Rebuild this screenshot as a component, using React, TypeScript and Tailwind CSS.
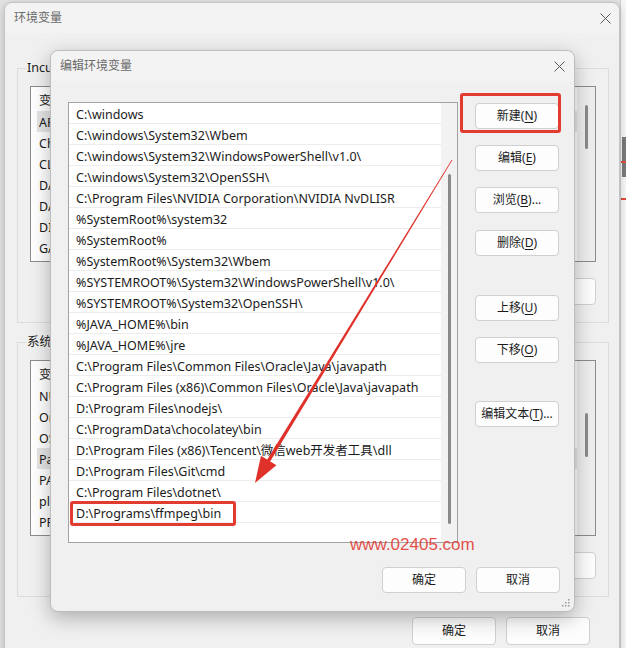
import React from "react";

const paths = [
  "C:\\windows",
  "C:\\windows\\System32\\Wbem",
  "C:\\windows\\System32\\WindowsPowerShell\\v1.0\\",
  "C:\\windows\\System32\\OpenSSH\\",
  "C:\\Program Files\\NVIDIA Corporation\\NVIDIA NvDLISR",
  "%SystemRoot%\\system32",
  "%SystemRoot%",
  "%SystemRoot%\\System32\\Wbem",
  "%SYSTEMROOT%\\System32\\WindowsPowerShell\\v1.0\\",
  "%SYSTEMROOT%\\System32\\OpenSSH\\",
  "%JAVA_HOME%\\bin",
  "%JAVA_HOME%\\jre",
  "C:\\Program Files\\Common Files\\Oracle\\Java\\javapath",
  "C:\\Program Files (x86)\\Common Files\\Oracle\\Java\\javapath",
  "D:\\Program Files\\nodejs\\",
  "C:\\ProgramData\\chocolatey\\bin",
  "D:\\Program Files (x86)\\Tencent\\微信web开发者工具\\dll",
  "D:\\Program Files\\Git\\cmd",
  "C:\\Program Files\\dotnet\\",
  "D:\\Programs\\ffmpeg\\bin",
];

const userVars = ["APPDATA", "ChocolateyLastPathUpdate", "CLASSPATH", "DATA_HOME", "DART_HOME", "DIR", "GATEWAY"];
const sysVars = ["NUMBER_OF_PROCESSORS", "OneDrive", "OS", "Path", "PATHEXT", "platform", "PROCESSOR_ARCHITECTURE"];

const CloseX = () => (
  <svg width="11" height="11" viewBox="0 0 11 11" className="text-[#5a5a5a]">
    <path d="M0.5 0.5 L10.5 10.5 M10.5 0.5 L0.5 10.5" stroke="currentColor" strokeWidth="1" fill="none" />
  </svg>
);

interface BtnProps {
  label?: string;
  mn?: string;
  suffix?: string;
  className?: string;
}

const Btn = ({ label, mn, suffix, className = "" }: BtnProps) => (
  <div
    className={`w-[84px] h-[26px] shrink-0 flex items-center justify-center rounded-[4px] border border-[#d0d0d0] bg-[#fdfdfd] text-[12px] text-[#1b1b1b] ${className}`}
  >
    {label}
    {mn && (
      <>
        (<span className="underline underline-offset-[2px]">{mn}</span>)
      </>
    )}
    {suffix}
  </div>
);

// 뒤쪽 창의 변수 목록 (대부분 앞 창에 가려짐)
const VarList = ({ rows, hi, thumbTop }: { rows: string[]; hi: number; thumbTop: number }) => (
  <div className="ml-[12px] mt-[17px] w-[566px] h-[176px] border border-[#8c8c8c] bg-white flex">
    <div className="flex-1 pl-[6px]">
      <div className="h-[24px] pl-[2px] pt-[3px] flex items-center text-[12.5px] leading-[16px]">变量</div>
      {rows.map((r, i) => (
        <div
          key={r}
          className={`h-[21px] pl-[2px] pt-[3px] flex items-center text-[12.5px] leading-[16px] ${i === hi ? "bg-[#e5e5e5]" : ""}`}
        >
          {r}
        </div>
      ))}
    </div>
    <div className="w-[18px] bg-[#eeeeee] flex justify-center">
      <div className="w-[3px] h-[44px] rounded-full bg-[#8a8a8a]" style={{ marginTop: thumbTop }} />
    </div>
  </div>
);

const Group = ({ title, rows, hi, thumbTop, className = "" }: { title: string; rows: string[]; hi: number; thumbTop: number; className?: string }) => (
  <div className={`relative w-[592px] h-[255px] border border-[#dcdcdc] ${className}`}>
    <span className="absolute -top-[9px] left-[8px] px-[1px] bg-[#f0f0f0] text-[12.5px] leading-[16px] whitespace-nowrap">
      {title}
    </span>
    <VarList rows={rows} hi={hi} thumbTop={thumbTop} />
    <div className="mt-[16px] pr-[12px] flex justify-end gap-[10px]">
      <Btn className="h-[27px]" />
      <Btn className="h-[27px]" />
    </div>
  </div>
);

export default function App() {
  return (
    <div className="relative w-[626px] h-[648px] overflow-hidden bg-[#e3e3e3] text-[#1b1b1b] [font-family:'Noto_Sans','Noto_Sans_CJK_SC',sans-serif]">
      {/* window on the far right */}
      <div className="absolute right-0 top-0 w-[6px] h-full bg-[#f7f7f7] border-l border-[#cfcfcf]">
        <div className="mt-[137px] ml-[1px] w-[4px] h-[40px] bg-[#7a7a7a]" />
        <div className="absolute top-[161px] left-0 w-full h-[2px] bg-[#e04a3a]" />
        <div className="absolute top-[198px] left-0 w-full h-[2px] bg-[#e04a3a]" />
      </div>

      {/* 环境变量 */}
      <div className="absolute left-[4px] top-[2px] w-[616px] h-[660px] rounded-t-[8px] border border-[#c4c4c4] bg-[#f0f0f0] shadow-[0_2px_10px_rgba(0,0,0,0.2)] flex flex-col">
        <div className="h-[30px] shrink-0 pl-[9px] pr-[8px] flex items-center justify-between rounded-t-[8px] bg-[#f3f3f3]">
          <span className="text-[12px] text-[#6a6a6a]">环境变量</span>
          <CloseX />
        </div>
        <div className="px-[12px]">
          <Group title="Incu 的用户变量(U)" rows={userVars} hi={0} thumbTop={18} className="mt-[35px]" />
          <Group title="系统变量(S)" rows={sysVars} hi={3} thumbTop={52} className="mt-[19px]" />
          <div className="mt-[20px] pr-[17px] flex justify-end gap-[10px]">
            <Btn label="确定" className="h-[28px] bg-[#f9f9f9]" />
            <Btn label="取消" className="h-[28px] bg-[#f9f9f9]" />
          </div>
        </div>
      </div>

      {/* 编辑环境变量 */}
      <div className="absolute left-[50px] top-[50px] w-[525px] h-[562px] rounded-[8px] border border-[#bdbdbd] bg-[#f0f0f0] shadow-[0_6px_20px_rgba(0,0,0,0.28)] flex flex-col">
        <div className="h-[30px] shrink-0 pl-[9px] pr-[9px] flex items-center justify-between rounded-t-[8px] bg-[#f3f3f3]">
          <span className="text-[12px] text-[#6a6a6a]">编辑环境变量</span>
          <CloseX />
        </div>
        <div className="pl-[17px] pt-[21px] flex">
          <div className="relative w-[390px] h-[441px] border border-[#a3a3a3] bg-white flex">
            <div className="flex-1">
              {paths.map((p) => (
                <div key={p} className="h-[21px] pl-[7px] pt-[3px] flex items-center border-b border-[#ededed] text-[12.5px] leading-[16px] whitespace-nowrap">
                  {p}
                </div>
              ))}
            </div>
            <div className="w-[16px] bg-[#f2f2f2] flex justify-center">
              <div className="mt-[71px] w-[3px] h-[350px] rounded-full bg-[#8a8a8a]" />
            </div>
            <div className="absolute left-[1px] top-[398px] w-[166px] h-[25px] rounded-[3px] border-[3px] border-[#e23b30]" />
          </div>
          <div className="ml-[17px] flex flex-col">
            <div className="relative mt-[1px]">
              <Btn label="新建" mn="N" />
              <div className="absolute -left-[15px] -top-[10px] w-[101px] h-[40px] rounded-[3px] border-[3px] border-[#e23b30]" />
            </div>
            <Btn label="编辑" mn="E" className="mt-[16px]" />
            <Btn label="浏览" mn="B" suffix="..." className="mt-[16px]" />
            <Btn label="删除" mn="D" className="mt-[17px]" />
            <Btn label="上移" mn="U" className="mt-[39px]" />
            <Btn label="下移" mn="O" className="mt-[16px]" />
            <Btn label="编辑文本" mn="T" suffix="..." className="mt-[38px]" />
          </div>
        </div>
        <div className="mt-[24px] pr-[14px] flex justify-end gap-[10px]">
          <Btn label="确定" />
          <Btn label="取消" />
        </div>
        <svg width="8" height="8" viewBox="0 0 8 8" className="absolute right-[4px] bottom-[4px] text-[#9a9a9a]">
          <g fill="currentColor">
            <rect x="6" y="0" width="1.5" height="1.5" />
            <rect x="3" y="3" width="1.5" height="1.5" />
            <rect x="6" y="3" width="1.5" height="1.5" />
            <rect x="0" y="6" width="1.5" height="1.5" />
            <rect x="3" y="6" width="1.5" height="1.5" />
            <rect x="6" y="6" width="1.5" height="1.5" />
          </g>
        </svg>
      </div>

      {/* watermark */}
      <div className="absolute left-[350px] top-[535px] text-[17px] leading-[20px] text-[#e0302a]/85 [font-family:'Liberation_Sans',Arial,sans-serif]">
        www.02405.com
      </div>

      {/* arrow */}
      <svg className="absolute left-0 top-0 pointer-events-none" width="626" height="648">
        <path d="M452.3 160.2 L451.7 159.8 L266.2 461.3 L269.2 463.1 Z" fill="#e0302a" />
        <path d="M255 483 L261 455.8 L276.4 465.2 Z" fill="#e0302a" />
      </svg>
    </div>
  );
}
